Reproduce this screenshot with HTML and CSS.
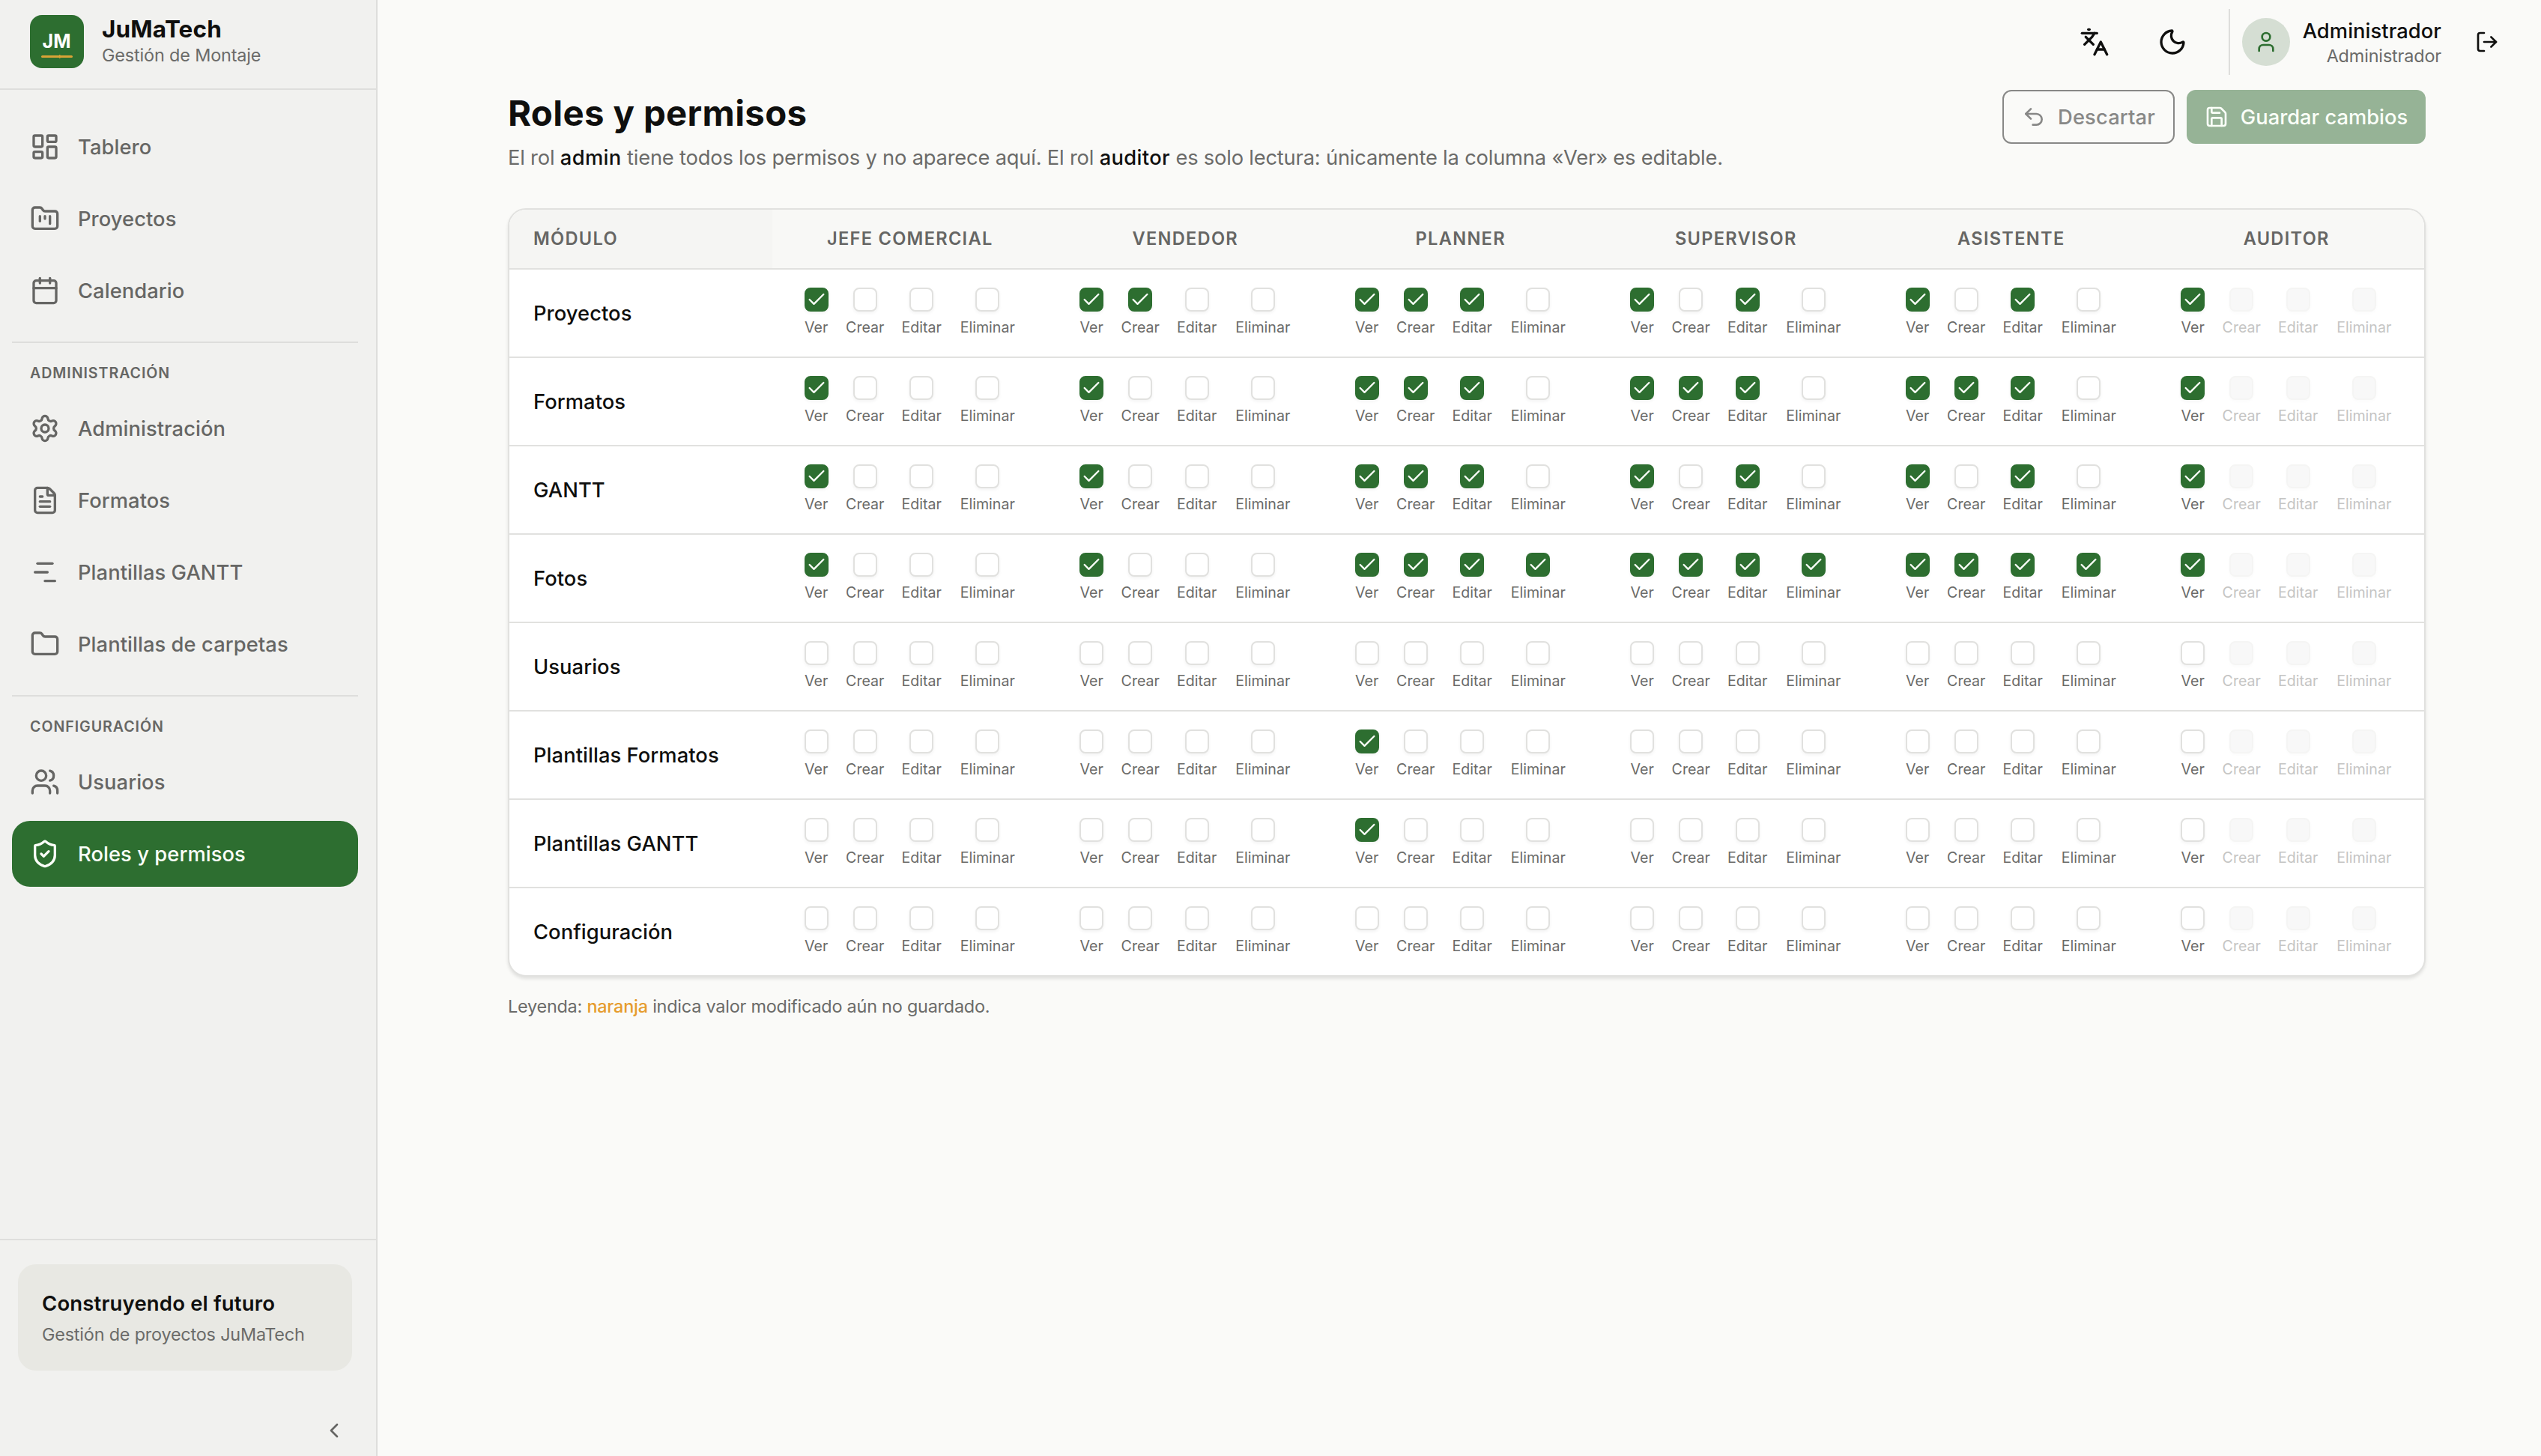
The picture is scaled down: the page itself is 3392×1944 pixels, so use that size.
FILE: index.html
```
<!DOCTYPE html>
<html lang="es">
<head>
    <meta charset="UTF-8">
    <title>JuMaTech - Roles y permisos</title>
    <link rel="stylesheet" href="styles.css">
</head>
<body>
    <div class="app">
        <aside class="sidebar">
            <div class="brand">
                <svg class="brand-logo" viewBox="0 0 72 71">
                    <rect width="72" height="71" rx="16" fill="#2d6e30"/>
                    <text x="35.5" y="44" text-anchor="middle" class="logo-text">JM</text>
                    <path d="M16.5 55.5h39" stroke="#d9a336" stroke-width="3" stroke-linecap="round"/>
                    <path d="M39 53l6 2.5-6 2.5z" fill="#d9a336"/>
                </svg>
                <div>
                    <div class="brand-name">JuMaTech</div>
                    <div class="brand-sub">Gestión de Montaje</div>
                </div>
            </div>

            <nav class="nav">
                <a class="nav-item">
                    <svg class="icon" viewBox="0 0 24 24"><rect width="7" height="9" x="3" y="3" rx="1"/><rect width="7" height="5" x="14" y="3" rx="1"/><rect width="7" height="9" x="14" y="12" rx="1"/><rect width="7" height="5" x="3" y="16" rx="1"/></svg>
                    <span>Tablero</span>
                </a>
                <a class="nav-item">
                    <svg class="icon" viewBox="0 0 24 24"><path d="M4 20h16a2 2 0 0 0 2-2V8a2 2 0 0 0-2-2h-7.93a2 2 0 0 1-1.66-.9l-.82-1.2A2 2 0 0 0 7.93 3H4a2 2 0 0 0-2 2v13c0 1.1.9 2 2 2Z"/><path d="M8 10v4"/><path d="M12 10v2"/><path d="M16 10v6"/></svg>
                    <span>Proyectos</span>
                </a>
                <a class="nav-item">
                    <svg class="icon" viewBox="0 0 24 24"><path d="M8 2v4"/><path d="M16 2v4"/><rect width="18" height="18" x="3" y="4" rx="2"/><path d="M3 10h18"/></svg>
                    <span>Calendario</span>
                </a>

                <div class="nav-section">ADMINISTRACIÓN</div>
                <a class="nav-item">
                    <svg class="icon" viewBox="0 0 24 24"><path d="M9.671 4.136a2.34 2.34 0 0 1 4.659 0 2.34 2.34 0 0 0 3.319 1.915 2.34 2.34 0 0 1 2.33 4.033 2.34 2.34 0 0 0 0 3.831 2.34 2.34 0 0 1-2.33 4.033 2.34 2.34 0 0 0-3.319 1.915 2.34 2.34 0 0 1-4.659 0 2.34 2.34 0 0 0-3.32-1.915 2.34 2.34 0 0 1-2.33-4.033 2.34 2.34 0 0 0 0-3.831A2.34 2.34 0 0 1 6.35 6.051a2.34 2.34 0 0 0 3.319-1.915"/><circle cx="12" cy="12" r="3"/></svg>
                    <span>Administración</span>
                </a>
                <a class="nav-item">
                    <svg class="icon" viewBox="0 0 24 24"><path d="M6 22a2 2 0 0 1-2-2V4a2 2 0 0 1 2-2h8a2.4 2.4 0 0 1 1.704.706l3.588 3.588A2.4 2.4 0 0 1 20 8v12a2 2 0 0 1-2 2z"/><path d="M14 2v5a1 1 0 0 0 1 1h5"/><path d="M10 9H8"/><path d="M16 13H8"/><path d="M16 17H8"/></svg>
                    <span>Formatos</span>
                </a>
                <a class="nav-item">
                    <svg class="icon" viewBox="0 0 24 24"><path d="M6 5h12"/><path d="M4 12h10"/><path d="M12 19h8"/></svg>
                    <span>Plantillas GANTT</span>
                </a>
                <a class="nav-item">
                    <svg class="icon" viewBox="0 0 24 24"><path d="M20 20a2 2 0 0 0 2-2V8a2 2 0 0 0-2-2h-7.9a2 2 0 0 1-1.69-.9L9.6 3.9A2 2 0 0 0 7.93 3H4a2 2 0 0 0-2 2v13a2 2 0 0 0 2 2Z"/></svg>
                    <span>Plantillas de carpetas</span>
                </a>

                <div class="nav-section">CONFIGURACIÓN</div>
                <a class="nav-item">
                    <svg class="icon" viewBox="0 0 24 24"><path d="M16 21v-2a4 4 0 0 0-4-4H6a4 4 0 0 0-4 4v2"/><path d="M16 3.128a4 4 0 0 1 0 7.744"/><path d="M22 21v-2a4 4 0 0 0-3-3.87"/><circle cx="9" cy="7" r="4"/></svg>
                    <span>Usuarios</span>
                </a>
                <a class="nav-item active">
                    <svg class="icon" viewBox="0 0 24 24"><path d="M20 13c0 5-3.5 7.5-7.66 8.95a1 1 0 0 1-.67-.01C7.5 20.5 4 18 4 13V6a1 1 0 0 1 1-1c2 0 4.5-1.2 6.24-2.72a1.17 1.17 0 0 1 1.52 0C14.51 3.81 17 5 19 5a1 1 0 0 1 1 1z"/><path d="m9 12 2 2 4-4"/></svg>
                    <span>Roles y permisos</span>
                </a>
            </nav>

            <div class="sidebar-footer">
                <div class="promo">
                    <div class="promo-title">Construyendo el futuro</div>
                    <div class="promo-text">Gestión de proyectos JuMaTech</div>
                </div>
                <div class="collapse">
                    <svg class="icon icon-sm" viewBox="0 0 24 24"><path d="m15 18-6-6 6-6"/></svg>
                </div>
            </div>
        </aside>

        <main class="main">
            <header class="topbar">
                <svg class="icon" viewBox="0 0 24 24"><path d="m5 8 6 6"/><path d="m4 14 6-6 2-3"/><path d="M2 5h12"/><path d="M7 2h1"/><path d="m22 22-5-10-5 10"/><path d="M14 18h6"/></svg>
                <svg class="icon moon" viewBox="0 0 24 24"><path d="M20.985 12.486a9 9 0 1 1-9.473-9.472c.405-.022.617.46.402.803a6 6 0 0 0 8.268 8.268c.344-.215.825-.004.803.401"/></svg>
                <div class="user">
                    <div class="avatar">
                        <svg class="icon icon-sm" viewBox="0 0 24 24"><path d="M19 21v-2a4 4 0 0 0-4-4H9a4 4 0 0 0-4 4v2"/><circle cx="12" cy="7" r="4"/></svg>
                    </div>
                    <div class="user-info">
                        <div class="user-name">Administrador</div>
                        <div class="user-role">Administrador</div>
                    </div>
                </div>
                <svg class="icon icon-sm" viewBox="0 0 24 24"><path d="m16 17 5-5-5-5"/><path d="M21 12H9"/><path d="M9 21H5a2 2 0 0 1-2-2V5a2 2 0 0 1 2-2h4"/></svg>
            </header>

            <div class="content">
                <div class="page-header">
                    <div>
                        <h1>Roles y permisos</h1>
                        <p class="subtitle">El rol <strong>admin</strong> tiene todos los permisos y no aparece aquí. El rol <strong>auditor</strong> es solo lectura: únicamente la columna «Ver» es editable.</p>
                    </div>
                    <div class="actions">
                        <button class="btn btn-outline" disabled>
                            <svg class="icon icon-sm" viewBox="0 0 24 24"><path d="M9 14 4 9l5-5"/><path d="M4 9h10.5a5.5 5.5 0 0 1 5.5 5.5a5.5 5.5 0 0 1-5.5 5.5H11"/></svg>
                            Descartar
                        </button>
                        <button class="btn btn-primary" disabled>
                            <svg class="icon icon-sm" viewBox="0 0 24 24"><path d="M15.2 3a2 2 0 0 1 1.4.6l3.8 3.8a2 2 0 0 1 .6 1.4V19a2 2 0 0 1-2 2H5a2 2 0 0 1-2-2V5a2 2 0 0 1 2-2z"/><path d="M17 21v-7a1 1 0 0 0-1-1H8a1 1 0 0 0-1 1v7"/><path d="M7 3v4a1 1 0 0 0 1 1h7"/></svg>
                            Guardar cambios
                        </button>
                    </div>
                </div>

                <div class="matrix" id="matrix">
                    <!-- Rows will be loaded here -->
                </div>

                <p class="legend">Leyenda: <span>naranja</span> indica valor modificado aún no guardado.</p>
            </div>
        </main>
    </div>

    <script>
        const roles = ['JEFE COMERCIAL', 'VENDEDOR', 'PLANNER', 'SUPERVISOR', 'ASISTENTE', 'AUDITOR'];
        const actions = ['Ver', 'Crear', 'Editar', 'Eliminar'];

        // one string per role: V = ver, C = crear, E = editar, X = eliminar
        const codes = ['V', 'C', 'E', 'X'];
        const modules = [
            { name: 'Proyectos', perms: ['V', 'VC', 'VCE', 'VE', 'VE', 'V'] },
            { name: 'Formatos', perms: ['V', 'V', 'VCE', 'VCE', 'VCE', 'V'] },
            { name: 'GANTT', perms: ['V', 'V', 'VCE', 'VE', 'VE', 'V'] },
            { name: 'Fotos', perms: ['V', 'V', 'VCEX', 'VCEX', 'VCEX', 'V'] },
            { name: 'Usuarios', perms: ['', '', '', '', '', ''] },
            { name: 'Plantillas Formatos', perms: ['', '', 'V', '', '', ''] },
            { name: 'Plantillas GANTT', perms: ['', '', 'V', '', '', ''] },
            { name: 'Configuración', perms: ['', '', '', '', '', ''] }
        ];

        const checkIcon = '<svg class="check-icon" viewBox="0 0 24 24"><path d="M20 6 9 17l-5-5"/></svg>';

        function renderCell(perm, roleIndex) {
            const auditor = roles[roleIndex] === 'AUDITOR';
            return `<div class="cell">${actions.map((action, i) => {
                const checked = perm.includes(codes[i]);
                const disabled = auditor && i > 0;
                return `
                    <label class="perm${disabled ? ' disabled' : ''}">
                        <span class="box${checked ? ' checked' : ''}">${checked ? checkIcon : ''}</span>
                        <span class="perm-label">${action}</span>
                    </label>`;
            }).join('')}</div>`;
        }

        function renderMatrix() {
            const head = `
                <div class="row head">
                    <div class="module">MÓDULO</div>
                    ${roles.map(role => `<div class="role">${role}</div>`).join('')}
                </div>`;
            const rows = modules.map(mod => `
                <div class="row">
                    <div class="module">${mod.name}</div>
                    ${mod.perms.map(renderCell).join('')}
                </div>`).join('');
            document.getElementById('matrix').innerHTML = head + rows;
        }

        renderMatrix();
    </script>
</body>
</html>
```

FILE: styles.css
```
* {
    box-sizing: border-box;
}

body {
    margin: 0;
    font-family: Inter, "Liberation Sans", sans-serif;
    font-size: 27.3px;
    color: #0f0f0e;
    background: #fafaf8;
}

h1, p {
    margin: 0;
}

.app {
    display: flex;
    height: 1944px;
}

.icon {
    width: 40px;
    height: 40px;
    flex-shrink: 0;
    fill: none;
    stroke: currentColor;
    stroke-width: 2;
    stroke-linecap: round;
    stroke-linejoin: round;
}

.icon-sm {
    width: 32px;
    height: 32px;
}

/* Sidebar */
.sidebar {
    width: 504px;
    flex-shrink: 0;
    display: flex;
    flex-direction: column;
    background: #f1f1ef;
    border-right: 2px solid #dededc;
}

.brand {
    display: flex;
    align-items: center;
    gap: 24px;
    height: 120px;
    padding: 0 40px 7px;
    border-bottom: 2px solid #dededc;
}

.brand-logo {
    width: 72px;
    height: 71px;
    flex-shrink: 0;
}

.logo-text {
    font-size: 25px;
    font-weight: 700;
    fill: #fff;
}

.brand-name {
    font-size: 31.5px;
    font-weight: 700;
    line-height: 36px;
    letter-spacing: 0.004em;
    white-space: nowrap;
}

.brand-sub {
    font-size: 23.4px;
    line-height: 34px;
    letter-spacing: -0.006em;
    color: #6b6b69;
    white-space: nowrap;
}

.nav {
    flex: 1;
    display: flex;
    flex-direction: column;
    gap: 8px;
    padding: 32px 24px 0 16px;
}

.nav-item {
    display: flex;
    align-items: center;
    gap: 24px;
    height: 88px;
    padding: 0 24px;
    border-radius: 24px;
    font-weight: 500;
    letter-spacing: 0.003em;
    color: #666664;
    white-space: nowrap;
}

.nav-item.active {
    background: #2d6e30;
    color: #fafff8;
}

.nav-section {
    height: 64px;
    margin-top: 16px;
    padding: 26px 24px 0;
    border-top: 2px solid #dededc;
    font-size: 19.6px;
    font-weight: 600;
    line-height: 28px;
    letter-spacing: 0.048em;
    color: #666664;
}

.sidebar-footer {
    height: 290px;
    padding: 32px 32px 0 24px;
    border-top: 2px solid #dededc;
}

.promo {
    height: 142px;
    padding: 32px;
    border-radius: 24px;
    background: #e8e8e3;
}

.promo-title {
    font-size: 27.5px;
    font-weight: 600;
    line-height: 40px;
    letter-spacing: 0.006em;
    white-space: nowrap;
}

.promo-text {
    margin-top: 5px;
    font-size: 23.4px;
    line-height: 34px;
    letter-spacing: -0.008em;
    color: #6b6b69;
    white-space: nowrap;
}

.collapse {
    display: flex;
    justify-content: flex-end;
    margin-top: 64px;
    padding-right: 8px;
    color: #666664;
}

/* Main */
.main {
    flex: 1;
}

.topbar {
    display: flex;
    align-items: center;
    justify-content: flex-end;
    height: 112px;
    padding-right: 56px;
}

.moon {
    margin-left: 64px;
}

.user {
    display: flex;
    align-items: center;
    gap: 16px;
    height: 88px;
    margin: 0 45px 0 55px;
    padding-left: 16px;
    border-left: 2px solid #dededc;
}

.avatar {
    display: flex;
    align-items: center;
    justify-content: center;
    width: 64px;
    height: 64px;
    border-radius: 50%;
    background: #d5ded3;
    color: #2d6e30;
}

.user-info {
    width: 186px;
    padding-top: 3px;
    text-align: right;
}

.user-name {
    font-weight: 500;
    line-height: 34px;
    letter-spacing: 0.003em;
}

.user-role {
    font-size: 23.4px;
    line-height: 32px;
    letter-spacing: -0.006em;
    color: #6b6b69;
}

.content {
    width: 2560px;
    margin-left: 174px;
    padding-top: 8px;
}

.page-header {
    display: flex;
    justify-content: space-between;
    align-items: flex-start;
}

h1 {
    font-size: 47.3px;
    font-weight: 700;
    line-height: 62px;
    letter-spacing: 0.008em;
}

.subtitle {
    margin-top: 9px;
    line-height: 40px;
    letter-spacing: -0.007em;
    color: #6b6b69;
}

.subtitle strong {
    font-weight: 500;
    letter-spacing: 0.013em;
    color: #0f0f0e;
}

.actions {
    display: flex;
    gap: 16px;
}

.btn {
    display: flex;
    align-items: center;
    justify-content: center;
    gap: 16px;
    height: 72px;
    border: none;
    border-radius: 12px;
    font-family: inherit;
    font-size: 27.3px;
    font-weight: 500;
}

.btn-outline {
    width: 230px;
    border: 2px solid #888887;
    background: transparent;
    color: #888887;
    letter-spacing: 0.006em;
}

.btn-primary {
    width: 319px;
    background: #96b396;
    color: #fafff8;
}

/* Permission matrix */
.matrix {
    margin-top: 47px;
    border: 2px solid #e1e1df;
    border-radius: 24px;
    background: #fff;
    box-shadow: 0 3px 4px rgba(0, 0, 0, 0.1);
    overflow: hidden;
}

.row {
    display: grid;
    grid-template-columns: 351px repeat(6, 1fr);
    height: 118px;
    border-bottom: 2px solid #e1e1df;
}

.row:last-child {
    height: 116px;
    border-bottom: none;
}

.module {
    display: flex;
    align-items: center;
    padding-left: 32px;
    font-weight: 500;
    letter-spacing: 0.003em;
    white-space: nowrap;
}

.row.head {
    height: 80px;
    background: #f8f8f6;
    font-size: 23.6px;
    color: #666664;
}

.head .module,
.head .role {
    padding-bottom: 2px;
    font-weight: 600;
    letter-spacing: 0.055em;
}

.head .module {
    background: #f5f5f3;
}

.role {
    display: flex;
    align-items: center;
    justify-content: center;
}

.cell {
    display: grid;
    grid-template-columns: 32px 50px 53px 75px;
    gap: 24px;
    justify-content: center;
    padding-top: 24px;
}

.perm {
    display: flex;
    flex-direction: column;
    align-items: center;
}

.box {
    display: flex;
    align-items: center;
    justify-content: center;
    width: 32px;
    height: 32px;
    border: 2px solid #e1e1df;
    border-radius: 8px;
    background: #fff;
    box-shadow: 0 2px 4px rgba(0, 0, 0, 0.05);
}

.box.checked {
    border-color: #2d6e30;
    background: #2d6e30;
}

.check-icon {
    width: 28px;
    height: 28px;
    flex-shrink: 0;
    fill: none;
    stroke: #fafff8;
    stroke-width: 2;
    stroke-linecap: round;
    stroke-linejoin: round;
}

.perm-label {
    margin-top: 9px;
    font-size: 19.6px;
    line-height: 24px;
    color: #6b6b69;
}

.perm.disabled .box {
    border-color: #f5f5f4;
    background: #f8f8f8;
    box-shadow: 0 2px 4px rgba(0, 0, 0, 0.02);
}

.perm.disabled .perm-label {
    color: #c5c5c4;
}

.legend {
    margin-top: 24px;
    font-size: 23.4px;
    line-height: 32px;
    letter-spacing: -0.009em;
    color: #6b6b69;
}

.legend span {
    font-weight: 500;
    color: #e69c2e;
}
```
